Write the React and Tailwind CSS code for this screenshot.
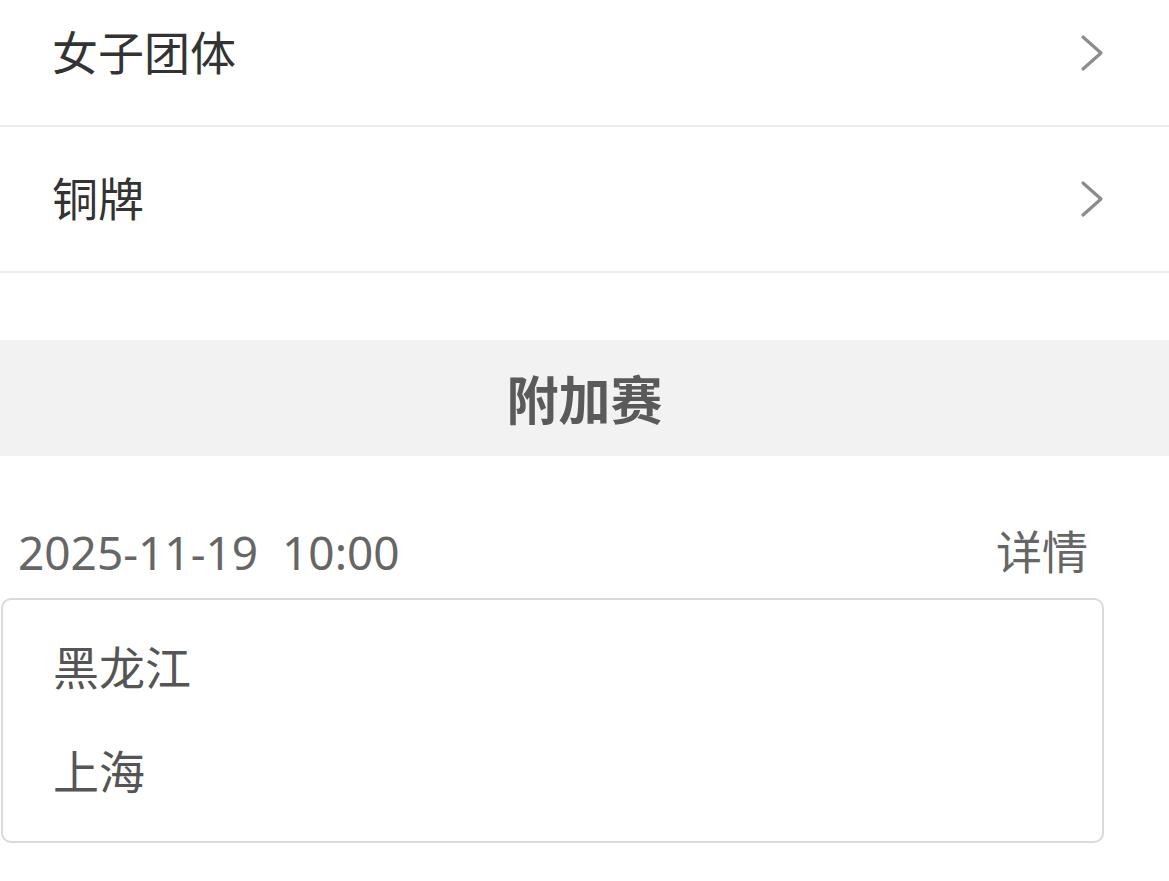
import React from 'react';

const font = { fontFamily: '"Noto Sans CJK SC", "Noto Sans", sans-serif' };
const digits = { fontFamily: '"Noto Sans", "Noto Sans CJK SC", sans-serif' };

const Chevron = () => (
  <svg width="24" height="38" viewBox="0 0 24 38" fill="none" className="shrink-0">
    <polyline
      points="3,3 21,19 3,35"
      stroke="#8c8c8c"
      strokeWidth="3.2"
      strokeLinecap="round"
      strokeLinejoin="round"
    />
  </svg>
);

const MenuRow = ({ label }) => (
  <div className="flex items-center justify-between h-[146px] pl-[52px] pr-[65px] border-b-2 border-[#ebebf0]">
    <span className="text-[46px] text-[#333333] leading-none pb-[6px]">{label}</span>
    <Chevron />
  </div>
);

const App = () => {
  const teams = ['黑龙江', '上海'];

  return (
    <div className="w-[1169px] h-[881px] overflow-hidden bg-white relative" style={font}>
      <div className="-mt-[19px]">
        <MenuRow label="女子团体" />
        <MenuRow label="铜牌" />
      </div>

      <div className="mt-[67px] h-[116px] bg-[#f2f2f2] flex items-center justify-center">
        <span className="text-[52px] font-bold text-[#5a5a5a] leading-none">附加赛</span>
      </div>

      {/* match */}
      <div className="mt-[66px] h-[60px] flex items-center justify-between pl-[18px] pr-[81px]">
        <span className="text-[46px] text-[#666666] leading-none whitespace-pre" style={digits}>
          2025-11-19  10:00
        </span>
        <span className="text-[46px] text-[#666666] leading-none pb-[6px]">详情</span>
      </div>

      <div className="mt-[16px] ml-[1px] w-[1103px] h-[245px] border-2 border-[#d9d9d9] rounded-[10px] pt-[16px] pl-[50px]">
        {teams.map((t) => (
          <div key={t} className="h-[104px] flex items-center">
            <span className="text-[46px] text-[#555555] leading-none pb-[6px]">{t}</span>
          </div>
        ))}
      </div>
    </div>
  );
};

export default App;
